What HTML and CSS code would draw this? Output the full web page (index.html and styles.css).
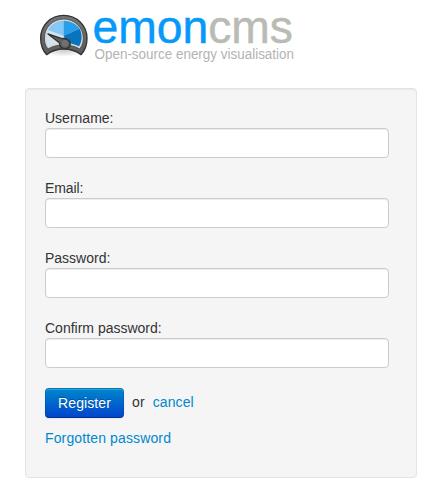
FILE: index.html
```html
<!DOCTYPE html>
<html lang="en">
<head>
<meta charset="utf-8">
<title>Emoncms</title>
<link rel="stylesheet" href="styles.css">
</head>
<body>
<main class="login">
  <svg class="logo" width="271" height="60" viewBox="0 0 271 60" role="img" aria-label="emoncms">
    <defs>
      <linearGradient id="rim" x1="0" y1="0" x2="0" y2="1">
        <stop offset="0" stop-color="#777"/><stop offset="1" stop-color="#5a5a5a"/>
      </linearGradient>
      <radialGradient id="shadow">
        <stop offset="0" stop-color="#000" stop-opacity=".2"/><stop offset="1" stop-color="#000" stop-opacity="0"/>
      </radialGradient>
    </defs>
    <g transform="scale(.33333)">
      <ellipse cx="101" cy="136" rx="66" ry="20" fill="url(#shadow)"/>
      <path d="M50 149C38 137 32 119 32 100C32 61 62 31 101 31S171 61 171 100C171 119 165 137 153 149C139 138 122 132 101 132S64 138 50 149Z" fill="url(#rim)" stroke="#333" stroke-width="4" stroke-linejoin="round"/>
      <path d="M54 132C46 122 43 112 43 99C43 67 69 42 101 42S160 67 160 99C160 112 157 122 149 132C136 124 119 120 101 120S67 124 54 132Z" fill="#d5dadd" stroke="#444" stroke-width="2.5"/>
      <path d="M101 92L54 76C47 91 48 112 56 125Q75 115 98 115Z" fill="#d4e4ee"/>
      <path d="M101 92L54 75C62 58 79 48 101 47Z" fill="#85c8f7"/>
      <path d="M101 92V47C124 48 141 58 149 71Z" fill="#2b9ee9"/>
      <path d="M101 92L149 71C158 89 156 110 147 124C134 117 122 115 111 114Z" fill="#0774bd"/>
      <path d="M54 87L96 101Q111 98 119 110Q123 122 115 128Q106 134 95 128Q88 123 88 113Z" fill="#606060" stroke="#333" stroke-width="4" stroke-linejoin="round"/>
      <circle cx="105" cy="115" r="10" fill="#707070"/>
    </g>
    <text class="brand" x="62.5" y="38" textLength="200.5" lengthAdjust="spacingAndGlyphs"><tspan class="brand-blue">emon</tspan><tspan class="brand-grey">cms</tspan></text>
    <text class="tagline" x="64.5" y="53.5" textLength="199.5" lengthAdjust="spacingAndGlyphs">Open-source energy visualisation</text>
  </svg>
  <form class="well">
    <label class="field">Username:<input type="text"></label>
    <label class="field"><span class="tight">Email:</span><input type="text"></label>
    <label class="field">Password:<input type="password"></label>
    <label class="field">Confirm password:<input type="password"></label>
    <div class="actions">
      <button class="btn" type="button">Register</button>
      <span class="or">or</span>
      <a class="cancel" href="#">cancel</a>
    </div>
    <a class="forgot" href="#">Forgotten password</a>
  </form>
</main>
</body>
</html>
```
FILE: styles.css
```css
* { box-sizing: border-box; }
body {
  margin: 0;
  background: #fff;
  color: #333;
  font: 14px/20px "Liberation Sans", Arial, sans-serif;
}
.login {
  width: 392px;
  margin-left: 25px;
  padding-top: 5px;
}
.logo { display: block; margin-left: 5px; }
.brand { font-size: 47px; stroke-width: .5px; }
.brand-blue { fill: #0699fa; stroke: #0699fa; }
.brand-grey { fill: #b9bcb5; stroke: #b9bcb5; }
.tagline { font-size: 14px; fill: #b3b3b3; }
.well {
  height: 390px;
  margin-top: 23px;
  padding: 19px;
  background: #f5f5f5;
  border: 1px solid #e3e3e3;
  border-radius: 4px;
  box-shadow: inset 0 1px 1px rgba(0, 0, 0, .05);
}
.field { display: block; margin-bottom: 20px; }
.tight { letter-spacing: -.1px; }
.field input {
  display: block;
  width: 344px;
  height: 30px;
  padding: 4px 6px;
  background: #fff;
  border: 1px solid #ccc;
  border-radius: 4px;
  box-shadow: inset 0 1px 1px rgba(0, 0, 0, .075);
}
.actions { display: flex; align-items: flex-start; margin-bottom: 10px; }
.btn {
  width: 79px;
  height: 30px;
  padding: 4px 0;
  color: #fff;
  font: inherit;
  letter-spacing: .1px;
  text-shadow: 0 -1px 0 rgba(0, 0, 0, .25);
  background: linear-gradient(#08c, #04c) border-box;
  border: 1px solid;
  border-color: rgba(0, 0, 0, .1) rgba(0, 0, 0, .1) rgba(0, 0, 0, .25);
  border-radius: 4px;
  box-shadow: inset 0 1px 0 rgba(255, 255, 255, .2), 0 1px 2px rgba(0, 0, 0, .05);
}
.or, .cancel { margin-top: 4px; letter-spacing: .1px; }
.or { margin-left: 8px; margin-right: 8px; }
a { color: #08c; text-decoration: none; }
.forgot { display: block; letter-spacing: .13px; }
```
